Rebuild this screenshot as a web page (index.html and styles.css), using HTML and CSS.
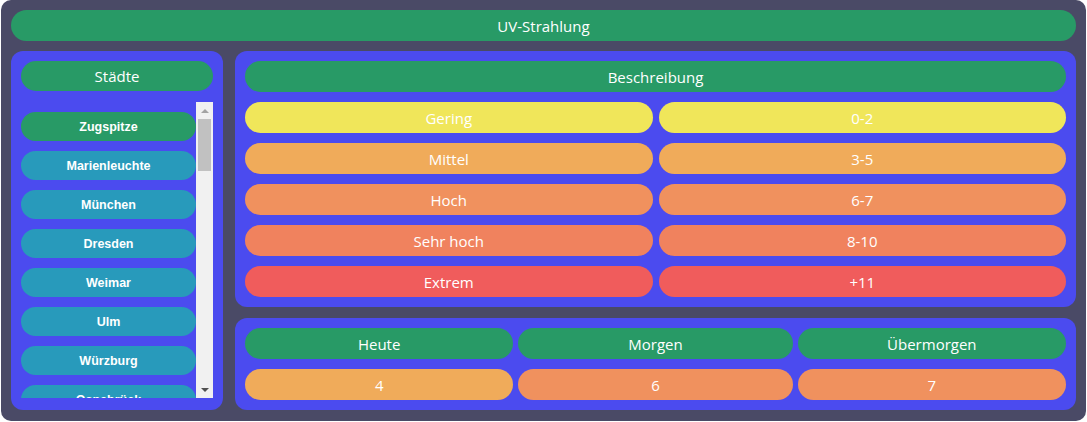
FILE: index.html
```html
<!DOCTYPE html>
<html lang="de">
<head>
<meta charset="utf-8">
<title>UV-Strahlung</title>
<link rel="stylesheet" href="styles.css">
</head>
<body>
<div class="app">
  <div class="pill green title">UV-Strahlung</div>
  <div class="main">
    <div class="panel cities">
      <div class="pill green head">Städte</div>
      <div class="listbox">
        <div class="list">
          <div class="city active">Zugspitze</div>
          <div class="city">Marienleuchte</div>
          <div class="city">München</div>
          <div class="city">Dresden</div>
          <div class="city">Weimar</div>
          <div class="city">Ulm</div>
          <div class="city">Würzburg</div>
          <div class="city">Osnabrück</div>
          <div class="city">Berlin</div>
          <div class="city">Hamburg</div>
          <div class="city">Köln</div>
          <div class="city">Frankfurt</div>
          <div class="city">Stuttgart</div>
          <div class="city">Düsseldorf</div>
          <div class="city">Leipzig</div>
          <div class="city">Dortmund</div>
          <div class="city">Essen</div>
          <div class="city">Bremen</div>
          <div class="city">Hannover</div>
          <div class="city">Nürnberg</div>
          <div class="city">Duisburg</div>
          <div class="city">Bochum</div>
          <div class="city">Wuppertal</div>
          <div class="city">Bielefeld</div>
          <div class="city">Bonn</div>
          <div class="city">Münster</div>
          <div class="city">Karlsruhe</div>
          <div class="city">Mannheim</div>
          <div class="city">Augsburg</div>
          <div class="city">Wiesbaden</div>
          <div class="city">Kiel</div>
          <div class="city">Rostock</div>
          <div class="city">Freiburg</div>
          <div class="city">Erfurt</div>
          <div class="city">Kassel</div>
          <div class="city">Potsdam</div>
          <div class="city">Lübeck</div>
          <div class="city">Regensburg</div>
        </div>
        <div class="scrollbar" aria-hidden="true">
          <div class="sb-btn"><span class="arrow up"></span></div>
          <div class="sb-track"><div class="sb-thumb"></div></div>
          <div class="sb-btn"><span class="arrow down"></span></div>
        </div>
      </div>
    </div>
    <div class="right">
      <div class="panel scale">
        <div class="pill green span2">Beschreibung</div>
        <div class="pill lv1">Gering</div>
        <div class="pill lv1">0-2</div>
        <div class="pill lv2">Mittel</div>
        <div class="pill lv2">3-5</div>
        <div class="pill lv3">Hoch</div>
        <div class="pill lv3">6-7</div>
        <div class="pill lv4">Sehr hoch</div>
        <div class="pill lv4">8-10</div>
        <div class="pill lv5">Extrem</div>
        <div class="pill lv5">+11</div>
      </div>
      <div class="panel forecast">
        <div class="pill green">Heute</div>
        <div class="pill green">Morgen</div>
        <div class="pill green">Übermorgen</div>
        <div class="pill lv2">4</div>
        <div class="pill lv3">6</div>
        <div class="pill lv3">7</div>
      </div>
    </div>
  </div>
</div>
</body>
</html>
```

FILE: styles.css
```css
html, body {
  margin: 0;
  padding: 0;
  background: #ffffff;
}

.app {
  box-sizing: border-box;
  margin-left: 1px;
  width: 1085px;
  height: 421px;
  padding: 10px;
  background: #4a4a66;
  border-radius: 10px;
  font-family: "Open Sans", "Noto Sans", sans-serif;
  font-size: 15px;
  color: #ffffff;
  display: flex;
  flex-direction: column;
  gap: 10px;
}

.pill {
  height: 31px;
  border-radius: 16px;
  display: flex;
  align-items: center;
  justify-content: center;
  white-space: nowrap;
}

.green { background: #289a66; }
.lv1 { background: #f0e65a; }
.lv2 { background: #f0ab5a; }
.lv3 { background: #f0915e; }
.lv4 { background: #f0825e; }
.lv5 { background: #f05c5c; }

.title {
  flex: none;
}

.main {
  display: flex;
  gap: 12px;
  height: 359px;
}

.panel {
  box-sizing: border-box;
  background: #4b4bef;
  border-radius: 12px;
  padding: 10px;
}

.cities {
  width: 212px;
  flex: none;
  display: flex;
  flex-direction: column;
  gap: 11px;
  padding-bottom: 12px;
}

.cities .head {
  height: 30px;
  border-radius: 15px;
}

.listbox {
  flex: 1;
  min-height: 0;
  display: flex;
}

.list {
  flex: 1;
  min-width: 0;
  overflow: hidden;
  padding-top: 10px;
  display: flex;
  flex-direction: column;
  gap: 10px;
}

.scrollbar {
  flex: none;
  width: 17px;
  background: #f1f1f1;
  display: flex;
  flex-direction: column;
}

.sb-btn {
  flex: none;
  height: 17px;
  display: flex;
  align-items: center;
  justify-content: center;
}

.arrow {
  width: 0;
  height: 0;
  border-left: 4px solid transparent;
  border-right: 4px solid transparent;
}

.arrow.up {
  border-bottom: 4px solid #a3a3a3;
}

.arrow.down {
  border-top: 4px solid #505050;
}

.sb-track {
  flex: 1;
}

.sb-thumb {
  margin: 0 2px;
  height: 52px;
  background: #c1c1c1;
}

.city {
  flex: none;
  height: 29px;
  border-radius: 15px;
  background: #289abb;
  display: flex;
  align-items: center;
  justify-content: center;
  font-family: "Liberation Sans", Arial, sans-serif;
  font-weight: bold;
  font-size: 12.5px;
}

.city.active {
  background: #289a66;
}

.right {
  flex: 1;
  display: flex;
  flex-direction: column;
  gap: 11px;
}

.scale {
  display: grid;
  grid-template-columns: 1fr 1fr;
  column-gap: 6px;
  row-gap: 10px;
}

.span2 {
  grid-column: 1 / span 2;
}

.forecast {
  display: grid;
  grid-template-columns: 268fr 274fr 268fr;
  column-gap: 5px;
  row-gap: 10px;
}
```
